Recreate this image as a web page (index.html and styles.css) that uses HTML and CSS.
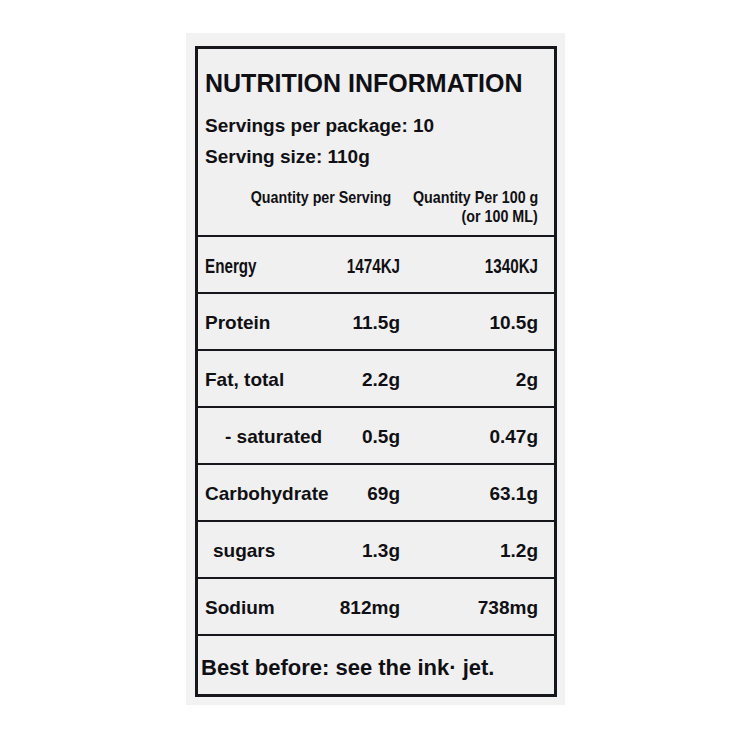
FILE: index.html
```html
<!DOCTYPE html>
<html>
<head>
<meta charset="utf-8">
<link rel="stylesheet" href="styles.css">
</head>
<body>
<div class="paper">
  <div class="label">
    <div class="header">
      <div class="title">NUTRITION INFORMATION</div>
      <div class="meta">Servings per package: 10</div>
      <div class="meta">Serving size: 110g</div>
      <div class="qty">
        <div class="qc2"><span class="sq">Quantity per Serving</span></div>
        <div class="qc3"><span class="sq">Quantity Per 100 g</span><span class="sq">(or 100 ML)</span></div>
      </div>
    </div>
    <div class="row narrow"><span class="name"><span class="nl">Energy</span></span><span class="v"><span class="nr">1474KJ</span></span><span class="v"><span class="nr">1340KJ</span></span></div>
    <div class="row"><span class="name">Protein</span><span class="v">11.5g</span><span class="v">10.5g</span></div>
    <div class="row"><span class="name">Fat, total</span><span class="v">2.2g</span><span class="v">2g</span></div>
    <div class="row"><span class="name sub">- saturated</span><span class="v">0.5g</span><span class="v">0.47g</span></div>
    <div class="row"><span class="name">Carbohydrate</span><span class="v">69g</span><span class="v">63.1g</span></div>
    <div class="row"><span class="name sub2">sugars</span><span class="v">1.3g</span><span class="v">1.2g</span></div>
    <div class="row"><span class="name">Sodium</span><span class="v">812mg</span><span class="v">738mg</span></div>
    <div class="best">Best before: see the ink· jet.</div>
  </div>
</div>
</body>
</html>
```
FILE: styles.css
```css
html, body {
  margin: 0;
  padding: 0;
  background: #ffffff;
}
body {
  width: 750px;
  height: 750px;
  font-family: "Liberation Sans", Arial, sans-serif;
  color: #101014;
}
.paper {
  margin-left: 186px;
  margin-top: 33px;
  width: 379px;
  height: 672px;
  box-sizing: border-box;
  padding: 13px 8px 0 9px;
  background: #f2f2f2;
}
.label {
  border: 3px solid #16161d;
  background: #f0f0f0;
}
.header {
  height: 186px;
  box-sizing: border-box;
  padding: 22px 16px 0 7px;
}
.title {
  font-size: 25px;
  line-height: 25px;
  font-weight: bold;
  margin-bottom: 14px;
}
.meta {
  font-size: 19px;
  line-height: 31px;
  font-weight: bold;
}
.qty {
  margin-top: 16px;
  display: flex;
  font-size: 17px;
  line-height: 19px;
  font-weight: bold;
}
.qc2 {
  width: 186px;
  display: flex;
  justify-content: flex-end;
}
.qc3 {
  width: 147px;
  display: flex;
  flex-direction: column;
  align-items: flex-end;
}
.sq {
  display: inline-block;
  white-space: nowrap;
  transform: scaleX(0.84);
  transform-origin: right center;
}
.row {
  height: 57px;
  box-sizing: border-box;
  border-top: 2px solid #16161d;
  padding: 3px 16px 0 7px;
  display: grid;
  grid-template-columns: 125px 70px 138px;
  align-items: center;
  font-size: 19px;
  font-weight: bold;
}
.row .v {
  text-align: right;
  white-space: nowrap;
}
.row.narrow {
  font-size: 20px;
}
.nl, .nr {
  display: inline-block;
  white-space: nowrap;
  transform: scaleX(0.76);
}
.nl {
  transform-origin: left center;
}
.nr {
  transform-origin: right center;
}
.sub {
  padding-left: 20px;
  white-space: nowrap;
}
.sub2 {
  padding-left: 8px;
}
.best {
  height: 60px;
  box-sizing: border-box;
  border-top: 2px solid #16161d;
  padding: 6px 0 0 3px;
  display: flex;
  align-items: center;
  font-size: 22px;
  font-weight: bold;
}
```
